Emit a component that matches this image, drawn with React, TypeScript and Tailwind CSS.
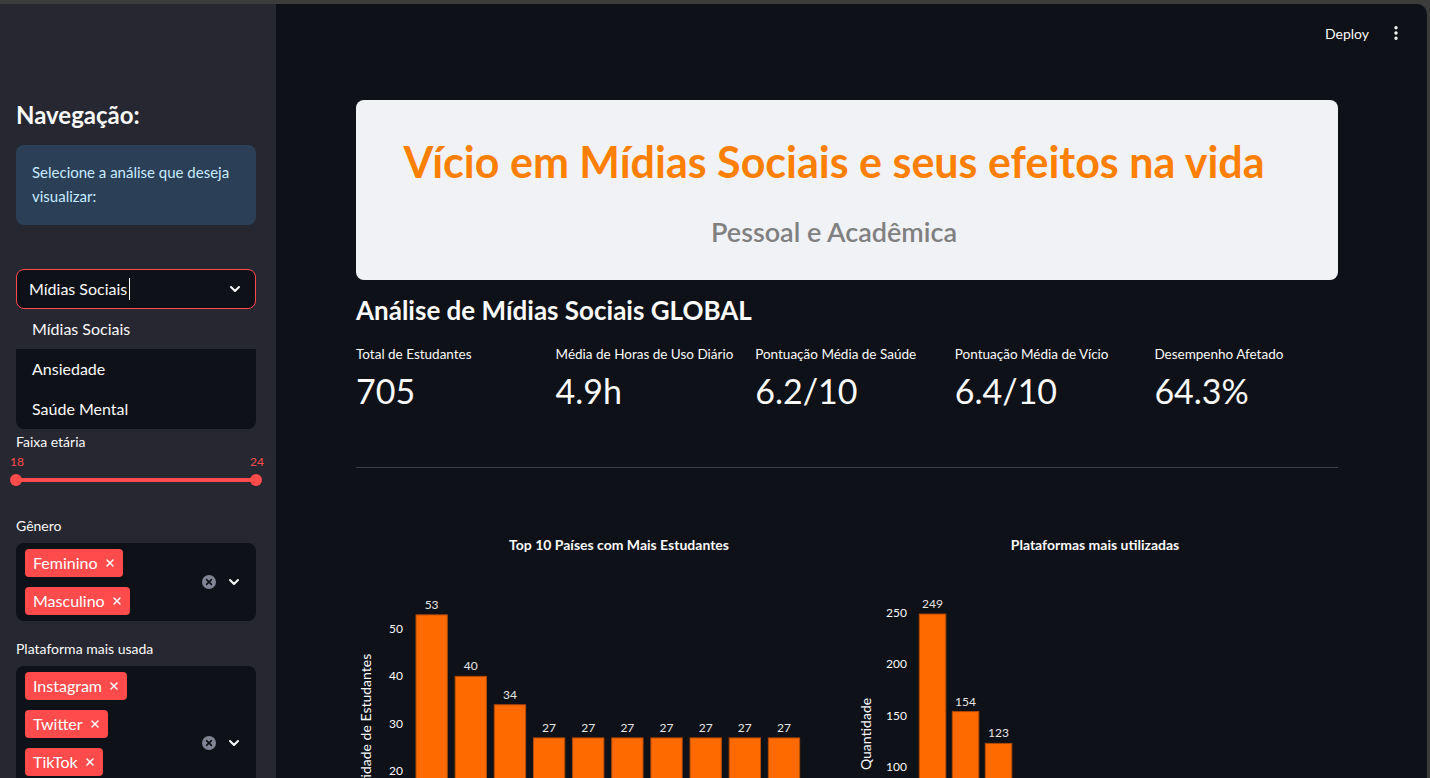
import { ChevronDown, EllipsisVertical, X } from "lucide-react";

const font = { fontFamily: "Lato, 'Noto Sans', sans-serif" };

const paises = [53, 40, 34, 27, 27, 27, 27, 27, 27, 27];
const plataformas = [249, 154, 123, 70, 52, 40];

const metrics = [
  { label: "Total de Estudantes", value: "705" },
  { label: "Média de Horas de Uso Diário", value: "4.9h" },
  { label: "Pontuação Média de Saúde", value: "6.2/10" },
  { label: "Pontuação Média de Vício", value: "6.4/10" },
  { label: "Desempenho Afetado", value: "64.3%" },
];

function ClearIcon() {
  return (
    <svg width="14" height="14" viewBox="0 0 14 14">
      <circle cx="7" cy="7" r="7" fill="#808495" />
      <path d="M4.6 4.6 L9.4 9.4 M9.4 4.6 L4.6 9.4" stroke="#0e1117" strokeWidth="1.6" strokeLinecap="round" />
    </svg>
  );
}

function Tag({ label }: { label: string }) {
  return (
    <div className="flex h-[28px] w-fit items-center gap-[6px] rounded-[4px] bg-[#ff4b4b] pl-[8px] pr-[7px] text-[16px] text-white">
      <span>{label}</span>
      <X size={12} strokeWidth={3} />
    </div>
  );
}

function MultiSelect({ tags }: { tags: string[] }) {
  return (
    <div className="flex items-center rounded-[8px] bg-[#0e1117] py-[6px] pl-[9px] pr-[14px]">
      <div className="flex flex-1 flex-col gap-[10px]">
        {tags.map((t) => (
          <Tag key={t} label={t} />
        ))}
      </div>
      <div className="flex items-center gap-[10px]">
        <ClearIcon />
        <ChevronDown size={16} strokeWidth={3} color="#fafafa" />
      </div>
    </div>
  );
}

function CountryChart() {
  const y = (v: number) => 366.7 - v * 4.733;
  return (
    <svg width="483" height="300" className="block" style={font}>
      <text x="263" y="51" textAnchor="middle" fill="#fafafa" fontSize="14" fontWeight="700">
        Top 10 Países com Mais Estudantes
      </text>
      {[50, 40, 30, 20].map((t) => (
        <text key={t} x="47" y={y(t) + 4} textAnchor="end" fill="#fafafa" fontSize="12">
          {t}
        </text>
      ))}
      <text transform="translate(15 236) rotate(-90)" textAnchor="middle" fill="#fafafa" fontSize="14">
        Quantidade de Estudantes
      </text>
      {paises.map((v, i) => {
        const x = 60 + i * 39.15;
        return (
          <g key={i}>
            <rect x={x} y={y(v)} width="31.3" height={400 - y(v)} fill="#ff6a00" stroke="#b34a00" strokeWidth="1" />
            <text x={x + 15.6} y={y(v) - 6} textAnchor="middle" fill="#e6e6e6" fontSize="12">
              {v}
            </text>
          </g>
        );
      })}
    </svg>
  );
}

function PlatformChart() {
  const y = (v: number) => 370.7 - v * 1.0267;
  return (
    <svg width="483" height="300" className="block" style={font}>
      <text x="240" y="51" textAnchor="middle" fill="#fafafa" fontSize="14" fontWeight="700">
        Plataformas mais utilizadas
      </text>
      {[250, 200, 150, 100].map((t) => (
        <text key={t} x="52" y={y(t) + 4} textAnchor="end" fill="#fafafa" fontSize="12">
          {t}
        </text>
      ))}
      <text transform="translate(16 235) rotate(-90)" textAnchor="middle" fill="#fafafa" fontSize="14">
        Quantidade
      </text>
      {plataformas.map((v, i) => {
        const x = 64.3 + i * 33;
        return (
          <g key={i}>
            <rect x={x} y={y(v)} width="26.5" height={400 - y(v)} fill="#ff6a00" stroke="#b34a00" strokeWidth="1" />
            <text x={x + 13.2} y={y(v) - 6} textAnchor="middle" fill="#e6e6e6" fontSize="12">
              {v}
            </text>
          </g>
        );
      })}
    </svg>
  );
}

export default function App() {
  return (
    <div className="h-[778px] overflow-hidden bg-[#3c3c3c] pr-[3px] pt-[4px]" style={font}>
      <div className="flex h-full overflow-hidden rounded-tr-[10px]">
        {/* sidebar */}
        <aside className="flex w-[276px] shrink-0 flex-col bg-[#262730] pl-[16px] pr-[20px] pt-[96px] text-[#fafafa]">
          <h2 className="text-[24px] font-bold leading-[29px]">Navegação:</h2>
          <div className="mt-[16px] rounded-[8px] bg-[#2b3f57] pb-[17px] pl-[16px] pr-[10px] pt-[15px] text-[15px] leading-[24px] text-[#c7ebff]">
            Selecione a análise que deseja visualizar:
          </div>

          <div className="relative mt-[44px]">
            <div className="flex h-[40px] items-center justify-between rounded-[8px] border border-[#ff4b4b] bg-[#0e1117] pl-[12px] pr-[12px]">
              <div className="flex items-center text-[16px]">
                Mídias Sociais
                <span className="ml-[2px] h-[22px] w-px bg-white" />
              </div>
              <ChevronDown size={16} strokeWidth={3} />
            </div>
            <div className="absolute left-0 right-0 top-[40px] z-10 overflow-hidden rounded-b-[8px] bg-[#0e1117] text-[16px]">
              <div className="flex h-[40px] items-center bg-[#262730] px-[16px]">Mídias Sociais</div>
              <div className="flex h-[40px] items-center px-[16px]">Ansiedade</div>
              <div className="flex h-[40px] items-center px-[16px]">Saúde Mental</div>
            </div>
          </div>

          <label className="mt-[123px] text-[14px] leading-[20px]">Faixa etária</label>
          <div className="mt-[2px] flex justify-between text-[12px] leading-[16px] text-[#ff4b4b]">
            <span className="-ml-[6px]">18</span>
            <span className="-mr-[8px]">24</span>
          </div>
          <div className="mt-[4px] flex h-[20px] items-center">
            <div className="-ml-[6px] -mr-[6px] h-[12px] w-[12px] shrink-0 rounded-full bg-[#ff4b4b]" />
            <div className="h-[4px] flex-1 bg-[#ff4b4b]" />
            <div className="-ml-[6px] -mr-[6px] h-[12px] w-[12px] shrink-0 rounded-full bg-[#ff4b4b]" />
          </div>

          <label className="mt-[30px] text-[14px] leading-[20px]">Gênero</label>
          <div className="mt-[7px]">
            <MultiSelect tags={["Feminino", "Masculino"]} />
          </div>

          <label className="mt-[18px] text-[14px] leading-[20px]">Plataforma mais usada</label>
          <div className="mt-[7px]">
            <MultiSelect tags={["Instagram", "Twitter", "TikTok", "YouTube"]} />
          </div>
        </aside>

        {/* main */}
        <main className="flex flex-1 flex-col bg-[#0e1117] text-[#fafafa]">
          <div className="flex h-[58px] shrink-0 items-center justify-end gap-[18px] pr-[22px]">
            <span className="text-[14px]">Deploy</span>
            <EllipsisVertical size={18} strokeWidth={2.5} />
          </div>

          <div className="ml-[80px] w-[982px]">
            <div className="mt-[38px] rounded-[8px] bg-[#f0f2f6] pb-[31px] pr-[26px] pt-[35px] text-center">
              <h1 className="text-[43px] font-bold leading-[53px] text-[#ff7f00]">
                Vício em Mídias Sociais e seus efeitos na vida
              </h1>
              <h3 className="mt-[27px] text-[27px] font-semibold leading-[34px] text-[#808080]">
                Pessoal e Acadêmica
              </h3>
            </div>

            <h3 className="mt-[13px] text-[26px] font-bold leading-[34px]">Análise de Mídias Sociais GLOBAL</h3>

            <div className="mt-[17px] grid grid-cols-5 gap-[16px]">
              {metrics.map((m) => (
                <div key={m.label}>
                  <div className="whitespace-nowrap text-[13.5px] leading-[20px]">{m.label}</div>
                  <div className="mt-[5px] text-[34px] leading-[44px]">{m.value}</div>
                </div>
              ))}
            </div>

            <hr className="mt-[54px] border-t border-[#3d4048]" />

            <div className="mt-[31px] grid grid-cols-2 gap-[16px]">
              <CountryChart />
              <PlatformChart />
            </div>
          </div>
        </main>
      </div>
    </div>
  );
}
